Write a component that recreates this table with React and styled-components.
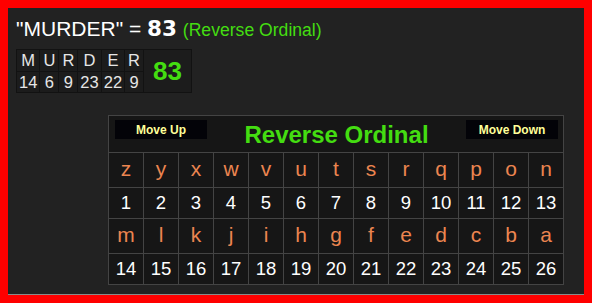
import React from 'react'
import styled, { createGlobalStyle } from 'styled-components'

const GlobalStyle = createGlobalStyle`
  html, body {
    padding: 0;
  }
  body {
    margin: 8px;
    background: #ff0000;
    font-family: "Liberation Sans", Arial, sans-serif;
  }
`

const Panel = styled.div`
  background: #222222;
  border-bottom: 1px solid #8a8a8a;
  padding: 9px 8px 9px;
`

const Headline = styled.div`
  font-size: 21px;
  line-height: 24px;
  height: 24px;
  color: #ffffff;
  white-space: nowrap;
  .total {
    font-family: "DejaVu Sans", Verdana, sans-serif;
    font-weight: bold;
    font-size: 21.5px;
  }
  .cipher {
    font-size: 17.6px;
    color: #44dd11;
  }
`

const Breakdown = styled.div`
  display: inline-flex;
  margin-top: 8px;
  background: #121212;
  padding: 1px;
  gap: 1px;
`

const Letters = styled.div`
  display: grid;
  grid-template-columns: ${(p) => `repeat(${p.count}, auto)`};
  grid-template-rows: 21px 20px;
  gap: 1px;
`

const SmallCell = styled.div`
  background: #1c1c1c;
  min-width: 14px;
  padding: 0 2px;
  font-size: 16.5px;
  line-height: ${(p) => (p.top ? '21px' : '20px')};
  color: #e6e6e6;
  text-align: center;
`

const Result = styled.div`
  background: #1c1c1c;
  padding: 0 9px;
  display: flex;
  align-items: center;
  font-size: 26px;
  font-weight: bold;
  color: #44dd11;
`

const Board = styled.div`
  display: grid;
  width: max-content;
  grid-template-columns: repeat(13, 34px);
  grid-template-rows: 36px 34px 30px 34px 30px;
  gap: 1px;
  padding: 1px;
  background: #444444;
  margin: 22px 0 0 92px;
`

const Header = styled.div`
  grid-column: 1 / -1;
  background: #161616;
  display: flex;
  justify-content: space-between;
  align-items: flex-start;
  padding: 4px 5px 0 6px;
`

const MoveButton = styled.button`
  width: 92px;
  height: 19px;
  border: none;
  padding: 0;
  background: #030308;
  color: #ffff99;
  font-family: "Liberation Sans", Arial, sans-serif;
  font-size: 12px;
  font-weight: bold;
`

const Title = styled.div`
  align-self: center;
  margin-top: -3px;
  font-size: 24px;
  font-weight: bold;
  color: #44dd11;
`

const Cell = styled.div`
  background: #161616;
  display: flex;
  align-items: center;
  justify-content: center;
  color: ${(p) => (p.letter ? '#ec8550' : '#ffffff')};
  font-size: ${(p) => (p.letter ? '21px' : '18.5px')};
  padding-bottom: ${(p) => (p.letter ? '2px' : '0')};
`

const word = 'MURDER'
const value = (ch) => 27 - (ch.toLowerCase().charCodeAt(0) - 96)
const alphabet = 'zyxwvutsrqponmlkjihgfedcba'.split('')

export default function App() {
  const total = word.split('').reduce((s, c) => s + value(c), 0)
  const rows = [alphabet.slice(0, 13), alphabet.slice(13)]

  return (
    <>
      <GlobalStyle />
      <Panel>
        <Headline>
          "{word}" = <span className="total">{total}</span>{' '}
          <span className="cipher">(Reverse Ordinal)</span>
        </Headline>
        <Breakdown>
          <Letters count={word.length}>
            {word.split('').map((c, i) => (
              <SmallCell key={'l' + i} top>
                {c}
              </SmallCell>
            ))}
            {word.split('').map((c, i) => (
              <SmallCell key={'n' + i}>{value(c)}</SmallCell>
            ))}
          </Letters>
          <Result>{total}</Result>
        </Breakdown>
        <Board>
          <Header>
            <MoveButton>Move Up</MoveButton>
            <Title>Reverse Ordinal</Title>
            <MoveButton>Move Down</MoveButton>
          </Header>
          {rows.map((row, r) => (
            <React.Fragment key={r}>
              {row.map((c) => (
                <Cell key={c} letter>
                  {c}
                </Cell>
              ))}
              {row.map((c) => (
                <Cell key={c + 'n'}>{value(c)}</Cell>
              ))}
            </React.Fragment>
          ))}
        </Board>
      </Panel>
    </>
  )
}
